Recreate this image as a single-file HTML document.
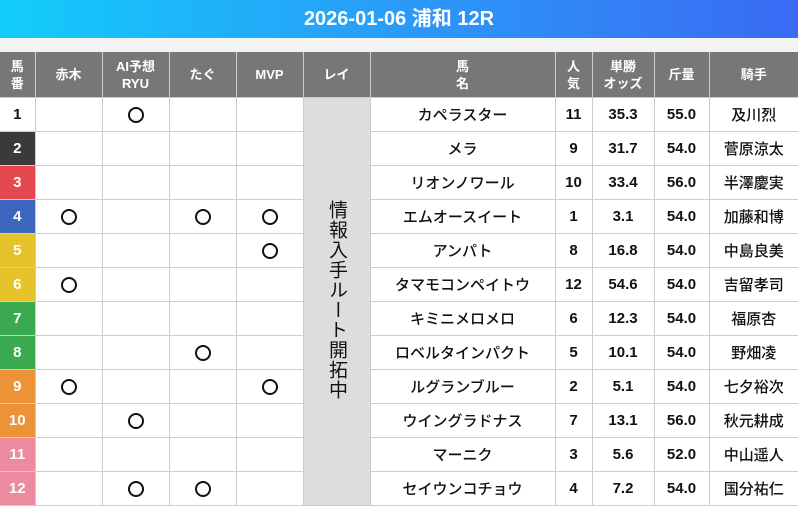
<!DOCTYPE html>
<html><head><meta charset="utf-8"><style>
body{margin:0;width:798px;height:504px;overflow:hidden;background:#fff;font-family:"Liberation Sans","Noto Sans CJK JP",sans-serif;}
.top{height:38px;background:linear-gradient(90deg,#12cdfb,#2a9bf8 50%,#3a6af4);color:#fff;font-weight:bold;font-size:20px;text-align:center;line-height:38px;}
.gap{height:14px;background:#f3f3f3;}
table{border-collapse:collapse;table-layout:fixed;width:798px;}
th{background:#777;color:#fff;font-size:13px;font-weight:bold;height:45px;border:1px solid #ccc;border-top:none;line-height:17px;padding:0;}
td{height:33px;border:1px solid #ccc;text-align:center;font-size:15px;font-weight:500;color:#111;padding:0;}
td.b{font-weight:bold;font-size:15px;}
td.n{color:#fff;font-weight:bold;}
.o{display:inline-block;width:12px;height:12px;border:2px solid #111;border-radius:50%;vertical-align:middle;}
td.rei{background:#ddd;vertical-align:middle;}
.v{writing-mode:vertical-rl;font-size:19px;letter-spacing:1px;font-weight:normal;display:inline-block;color:#111;}
tr>*:first-child{border-left:none}tr>*:last-child{border-right:none}
</style></head><body>
<div class="top">2026-01-06 浦和 12R</div>
<div class="gap"></div>
<table>
<colgroup><col style="width:35px"><col style="width:67px"><col style="width:67px"><col style="width:67px"><col style="width:67px"><col style="width:67px"><col style="width:185px"><col style="width:37px"><col style="width:62px"><col style="width:55px"><col style="width:89px"></colgroup>
<tr><th>馬<br>番</th><th>赤木</th><th>AI予想<br>RYU</th><th>たぐ</th><th>MVP</th><th>レイ</th><th>馬<br>名</th><th>人<br>気</th><th>単勝<br>オッズ</th><th>斤量</th><th>騎手</th></tr>
<tr><td class="n" style="color:#111;background:#fff">1</td><td></td><td><span class="o"></span></td><td></td><td></td><td class="rei" rowspan="12"><span class="v">情報入手ルート開拓中</span></td><td>カペラスター</td><td class="b">11</td><td class="b">35.3</td><td class="b">55.0</td><td>及川烈</td></tr>
<tr><td class="n" style="background:#3a3a3a">2</td><td></td><td></td><td></td><td></td><td>メラ</td><td class="b">9</td><td class="b">31.7</td><td class="b">54.0</td><td>菅原涼太</td></tr>
<tr><td class="n" style="background:#e5474e">3</td><td></td><td></td><td></td><td></td><td>リオンノワール</td><td class="b">10</td><td class="b">33.4</td><td class="b">56.0</td><td>半澤慶実</td></tr>
<tr><td class="n" style="background:#3d67bf">4</td><td><span class="o"></span></td><td></td><td><span class="o"></span></td><td><span class="o"></span></td><td>エムオースイート</td><td class="b">1</td><td class="b">3.1</td><td class="b">54.0</td><td>加藤和博</td></tr>
<tr><td class="n" style="background:#e6c22b">5</td><td></td><td></td><td></td><td><span class="o"></span></td><td>アンパト</td><td class="b">8</td><td class="b">16.8</td><td class="b">54.0</td><td>中島良美</td></tr>
<tr><td class="n" style="background:#e6c22b">6</td><td><span class="o"></span></td><td></td><td></td><td></td><td>タマモコンペイトウ</td><td class="b">12</td><td class="b">54.6</td><td class="b">54.0</td><td>吉留孝司</td></tr>
<tr><td class="n" style="background:#3aa94f">7</td><td></td><td></td><td></td><td></td><td>キミニメロメロ</td><td class="b">6</td><td class="b">12.3</td><td class="b">54.0</td><td>福原杏</td></tr>
<tr><td class="n" style="background:#3aa94f">8</td><td></td><td></td><td><span class="o"></span></td><td></td><td>ロベルタインパクト</td><td class="b">5</td><td class="b">10.1</td><td class="b">54.0</td><td>野畑凌</td></tr>
<tr><td class="n" style="background:#ec9338">9</td><td><span class="o"></span></td><td></td><td></td><td><span class="o"></span></td><td>ルグランブルー</td><td class="b">2</td><td class="b">5.1</td><td class="b">54.0</td><td>七夕裕次</td></tr>
<tr><td class="n" style="background:#ec9338">10</td><td></td><td><span class="o"></span></td><td></td><td></td><td>ウイングラドナス</td><td class="b">7</td><td class="b">13.1</td><td class="b">56.0</td><td>秋元耕成</td></tr>
<tr><td class="n" style="background:#ec8aa0">11</td><td></td><td></td><td></td><td></td><td>マーニク</td><td class="b">3</td><td class="b">5.6</td><td class="b">52.0</td><td>中山遥人</td></tr>
<tr><td class="n" style="background:#ec8aa0">12</td><td></td><td><span class="o"></span></td><td><span class="o"></span></td><td></td><td>セイウンコチョウ</td><td class="b">4</td><td class="b">7.2</td><td class="b">54.0</td><td>国分祐仁</td></tr>
</table>
</body></html>
